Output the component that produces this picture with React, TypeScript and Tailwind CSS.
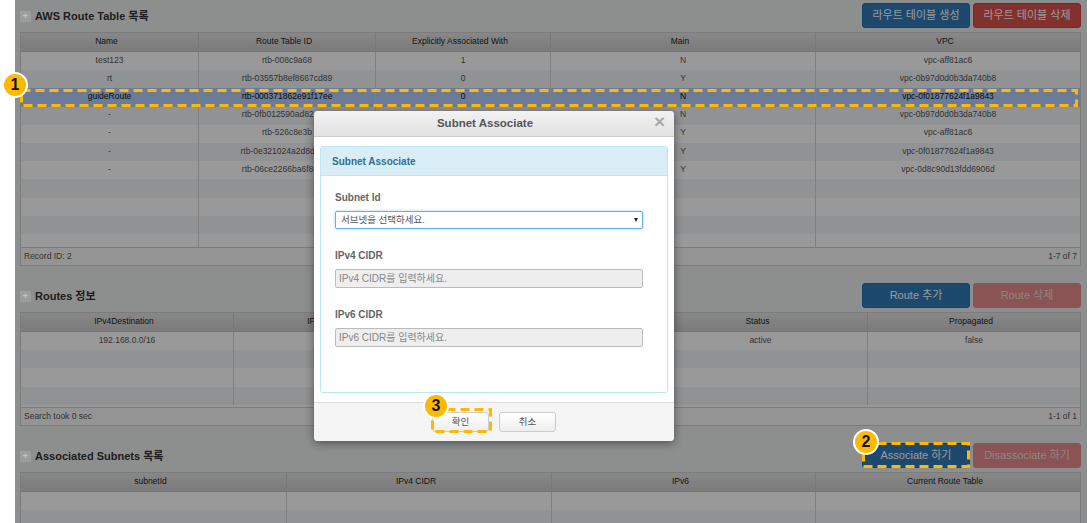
const font = "font-['Liberation_Sans','Noto_Sans_CJK_KR',sans-serif]";

type GridProps = {
  columns: string;
  headers: string[];
  rows: string[][];
  bodyHeight: string;
  selected?: number;
  footerLeft?: string;
  footerRight?: string;
};

function Grid({ columns, headers, rows, bodyHeight, selected, footerLeft, footerRight }: GridProps) {
  return (
    <div className="border border-[#cfcfcf] bg-white">
      <div className={`grid ${columns} h-[19px] border-b border-[#c4c4c4] bg-gradient-to-b from-[#e2e2e2] to-[#cdcdcd]`}>
        {headers.map((h, i) => (
          <div key={i} className="flex items-center justify-center whitespace-nowrap border-r border-[#c8c8c8] pb-[1px] pr-[6px] text-[8.5px] text-[#222] last:border-r-0">
            {h}
          </div>
        ))}
      </div>
      <div className={`overflow-hidden ${bodyHeight}`}>
        {rows.map((row, r) => (
          <div
            key={r}
            className={`grid ${columns} h-[18.2px] ${r === selected ? "bg-[#b5cffd] text-[#111]" : r % 2 ? "bg-[#f1f3f5] text-[#555]" : "bg-white text-[#555]"}`}
          >
            {row.map((c, i) => (
              <div key={i} className="flex items-center justify-center whitespace-nowrap border-r border-[#d4d4d4] pb-[2px] text-[8.5px] last:border-r-0">
                {c}
              </div>
            ))}
          </div>
        ))}
      </div>
      {(footerLeft || footerRight) && (
        <div className="flex h-[18px] items-center justify-between border-t border-[#cfcfcf] bg-[#f7f7f7] px-[3px] text-[8.5px] text-[#555]">
          <span>{footerLeft}</span>
          <span>{footerRight}</span>
        </div>
      )}
    </div>
  );
}

function SectionHead({ title, children }: { title: string; children: React.ReactNode }) {
  return (
    <div className="flex h-[25px] items-center justify-between">
      <div className="flex items-center gap-[4px] pt-[2px]">
        <span className="relative z-10 flex h-[11px] w-[11px] items-center justify-center bg-[#9c9c9c] text-[9px] font-bold leading-none text-[#c4c4c4]">+</span>
        <h2 className="text-[11px] font-bold text-[#333]">{title}</h2>
      </div>
      <div className="flex gap-[3px]">{children}</div>
    </div>
  );
}

function Btn({ label, color }: { label: string; color: "blue" | "red" | "faded" }) {
  const cls =
    color === "blue"
      ? "bg-[#337ab7] border-[#2e6da4]"
      : color === "red"
        ? "bg-[#d9534f] border-[#d43f3a]"
        : "bg-[#e48d8a] border-[#e48d8a]";
  return (
    <button className={`h-[25px] w-[108px] rounded-[3px] border text-[11px] ${color === "faded" ? "text-[#f3dcdc]" : "text-white"} ${cls}`}>
      {label}
    </button>
  );
}

function Badge({ n, className }: { n: number; className: string }) {
  return (
    <div className={`absolute flex h-[26px] w-[26px] items-center justify-center rounded-full border-2 border-white bg-[#ffba00] text-[16px] font-bold text-[#111] ${className}`}>
      {n}
    </div>
  );
}

// guide outline, dash lengths don't come out right with css dashed borders
function GuideBox({ w, h, className }: { w: number; h: number; className: string }) {
  return (
    <svg className={`absolute ${className}`} width={w} height={h}>
      <rect x={1.5} y={1.5} width={w - 3} height={h - 3} fill="none" stroke="#ffba00" strokeWidth={3} strokeDasharray="9 5" />
    </svg>
  );
}

const emptyRow = (n: number) => Array(n).fill("");

const routeRows = [
  ["test123", "rtb-008c9a68", "1", "N", "vpc-aff81ac6"],
  ["rt", "rtb-03557b8ef8667cd89", "0", "Y", "vpc-0b97d0d0b3da740b8"],
  ["guideRoute", "rtb-000371862e91f17ee", "0", "N", "vpc-0f01877624f1a9843"],
  ["-", "rtb-0fb012590ad82c3a1", "", "N", "vpc-0b97d0d0b3da740b8"],
  ["-", "rtb-526c8e3b", "", "Y", "vpc-aff81ac6"],
  ["-", "rtb-0e321024a2d8d6b47", "", "Y", "vpc-0f01877624f1a9843"],
  ["-", "rtb-06ce2266ba6f8e5d0", "", "Y", "vpc-0d8c90d13fdd6906d"],
  emptyRow(5),
  emptyRow(5),
  emptyRow(5),
  emptyRow(5),
];

export default function App() {
  return (
    <div className={`relative flex h-[523px] w-[1087px] overflow-hidden bg-white ${font}`}>
      <div className="w-[15px] shrink-0 bg-white" />

      <main className="relative flex-1 bg-[#eceeed] pl-[5px] pr-[6px] pt-[3px]">
        <SectionHead title="AWS Route Table 목록">
          <Btn label="라우트 테이블 생성" color="blue" />
          <Btn label="라우트 테이블 삭제" color="red" />
        </SectionHead>
        <div className="mt-[4px]">
          <Grid
            columns="grid-cols-[178px_177px_175px_265px_1fr]"
            headers={["Name", "Route Table ID", "Explicitly Associated With", "Main", "VPC"]}
            rows={routeRows}
            selected={2}
            bodyHeight="h-[195px]"
            footerLeft="Record ID: 2"
            footerRight="1-7 of 7"
          />
        </div>

        <div className="mt-[17px]">
          <SectionHead title="Routes 정보">
            <Btn label="Route 추가" color="blue" />
            <Btn label="Route 삭제" color="faded" />
          </SectionHead>
        </div>
        <div className="mt-[4px]">
          <Grid
            columns="grid-cols-[213px_213px_207px_214px_1fr]"
            headers={["IPv4Destination", "IPv6Destination", "Target", "Status", "Propagated"]}
            rows={[["192.168.0.0/16", "", "", "active", "false"], emptyRow(5), emptyRow(5), emptyRow(5)]}
            bodyHeight="h-[75px]"
            footerLeft="Search took 0 sec"
            footerRight="1-1 of 1"
          />
        </div>

        <div className="mt-[17px]">
          <SectionHead title="Associated Subnets 목록">
            <Btn label="Associate 하기" color="blue" />
            <Btn label="Disassociate 하기" color="faded" />
          </SectionHead>
        </div>
        <div className="mt-[4px]">
          <Grid
            columns="grid-cols-[266px_265px_264px_1fr]"
            headers={["subnetId", "IPv4 CIDR", "IPv6", "Current Route Table"]}
            rows={[emptyRow(4), emptyRow(4)]}
            bodyHeight="h-[37px]"
          />
        </div>

        {/* dim layer behind the modal */}
        <div className="absolute inset-0 bg-black/40" />
      </main>

      {/* Modal */}
      <div className="absolute left-[314px] top-[111px] flex h-[330px] w-[360px] flex-col overflow-hidden rounded-[4px] bg-white shadow-[0_2px_10px_rgba(0,0,0,0.45)]">
        <div className="relative flex h-[26px] shrink-0 items-center justify-center border-b border-[#ccc] bg-gradient-to-b from-[#f2f2f2] to-[#e2e2e2] pr-[18px]">
          <h3 className="text-[11.5px] font-bold text-[#555]">Subnet Associate</h3>
          <span className="absolute right-[9px] top-[1px] text-[19px] font-bold leading-[20px] text-[#aaa]">×</span>
        </div>
        <div className="flex-1 px-[6px] pt-[9px]">
          <div className="h-[247px] overflow-hidden rounded-[3px] border border-[#bce8f1]">
            <div className="flex h-[29px] items-center border-b border-[#bce8f1] bg-[#d9edf7] px-[11px] text-[10px] font-bold text-[#31708f]">
              Subnet Associate
            </div>
            <div className="flex flex-col px-[14px] pt-[15px]">
              <label className="text-[10px] font-bold leading-[13px] text-[#666]">Subnet Id</label>
              <div className="relative mt-[7px] h-[18px] w-[308px]">
                <select className="block h-full w-full appearance-none rounded-[2px] border border-[#66afe9] bg-white pl-[5px] text-[9.5px] text-[#555] shadow-[0_0_3px_rgba(102,175,233,0.6)]">
                  <option>서브넷을 선택하세요.</option>
                </select>
                <span className="absolute right-[5px] top-[7px] h-0 w-0 border-x-[2.5px] border-t-[4px] border-x-transparent border-t-[#222]" />
              </div>
              <label className="mt-[20px] text-[10px] font-bold leading-[13px] text-[#666]">IPv4 CIDR</label>
              <input
                disabled
                placeholder="IPv4 CIDR를 입력하세요."
                className="mt-[7px] h-[19px] w-[308px] rounded-[2px] border border-[#bbb] bg-[#eee] px-[3px] text-[10px] placeholder:text-[#888]"
              />
              <label className="mt-[20px] text-[10px] font-bold leading-[13px] text-[#666]">IPv6 CIDR</label>
              <input
                disabled
                placeholder="IPv6 CIDR를 입력하세요."
                className="mt-[7px] h-[19px] w-[308px] rounded-[2px] border border-[#bbb] bg-[#eee] px-[3px] text-[10px] placeholder:text-[#888]"
              />
            </div>
          </div>
        </div>
        <div className="flex h-[39px] shrink-0 items-center justify-center gap-[10px] border-t border-[#ddd] bg-[#f5f5f5]">
          <button className="h-[20px] w-[57px] rounded-[3px] border border-[#ccc] bg-gradient-to-b from-white to-[#eee] text-[9.5px] text-[#555]">확인</button>
          <button className="h-[20px] w-[57px] rounded-[3px] border border-[#ccc] bg-gradient-to-b from-white to-[#eee] text-[9.5px] text-[#555]">취소</button>
        </div>
      </div>

      {/* Guide callouts */}
      <GuideBox w={1058} h={18} className="left-[20px] top-[89px]" />
      <GuideBox w={108} h={26} className="left-[862px] top-[442px]" />
      <GuideBox w={61} h={25} className="left-[431px] top-[408px]" />
      <Badge n={1} className="left-[2px] top-[72px]" />
      <Badge n={2} className="left-[853px] top-[429px]" />
      <Badge n={3} className="left-[423px] top-[393px]" />
    </div>
  );
}
